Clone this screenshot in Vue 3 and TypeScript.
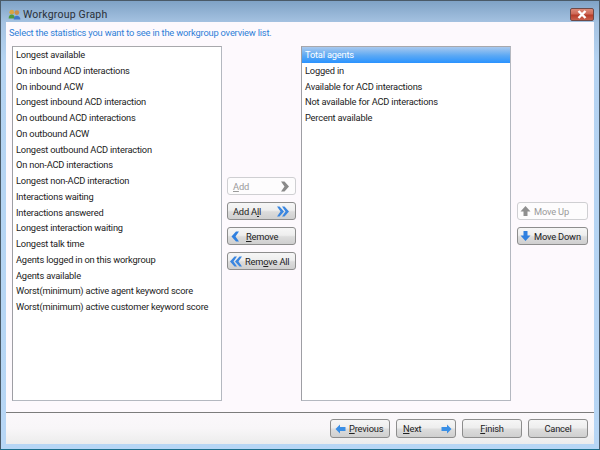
<script setup lang="ts">
const left: string[] = [
  'Longest available','On inbound ACD interactions','On inbound ACW','Longest inbound ACD interaction',
  'On outbound ACD interactions','On outbound ACW','Longest outbound ACD interaction','On non-ACD interactions',
  'Longest non-ACD interaction','Interactions waiting','Interactions answered','Longest interaction waiting',
  'Longest talk time','Agents logged in on this workgroup','Agents available',
  'Worst(minimum) active agent keyword score','Worst(minimum) active customer keyword score'
]
const right: string[] = ['Total agents','Logged in','Available for ACD interactions','Not available for ACD interactions','Percent available']
</script>

<template>
  <div class="win">
    <div class="titlebar">
      <svg class="appicon" width="13" height="11" viewBox="0 0 16 14">
        <circle cx="4.5" cy="4" r="3" fill="#d9a441"/>
        <path d="M0.500 12c0-3 1.600-5 4-5s4 2 4 5z" fill="#4f9a3d"/>
        <circle cx="11" cy="4.500" r="3" fill="#c98f4a"/>
        <path d="M7 13.500c0-3 1.600-5 4-5s4.500 2 4.500 5z" fill="#3d78c8"/>
      </svg>
      <span class="title">Workgroup Graph</span>
      <div class="close">
        <svg width="10" height="9" viewBox="0 0 10 9"><path d="M1.500 1l7 7M8.500 1l-7 7" stroke="#fff" stroke-width="2.400"/></svg>
      </div>
    </div>
    <div class="client">
      <div class="main">
        <p class="prompt">Select the statistics you want to see in the workgroup overview list.</p>
        <div class="columns">
          <ul class="list">
            <li v-for="s in left" :key="s">{{ s }}</li>
          </ul>
          <div class="midbtns">
            <button class="btn wide disabled"><span><u>A</u>dd</span>
              <svg width="11" height="11" viewBox="0 0 11 11"><path d="M2 0.500h3.500l4.500 5-4.500 5H2l3.500-5z" fill="#8a8a8a"/></svg>
            </button>
            <button class="btn wide"><span>Add A<u>l</u>l</span>
              <svg width="14" height="11" viewBox="0 0 14 11"><path d="M1 0.500h2.500l4.500 5-4.500 5H1l3.500-5zM6 0.500h2.500l4.500 5-4.500 5H6l3.500-5z" fill="#3a86e0"/></svg>
            </button>
            <button class="btn wide start">
              <svg class="one" width="9" height="11" viewBox="0 0 9 11"><path d="M8 0.500H5L0.500 5.500 5 10.500h3l-3.500-5z" fill="#2f80e0"/></svg>
              <span><u>R</u>emove</span>
            </button>
            <button class="btn wide start">
              <svg width="14" height="11" viewBox="0 0 14 11"><path d="M13 0.500h-2.500L6 5.500l4.500 5H13l-3.500-5zM8 0.500H5.500L1 5.500l4.500 5H8l-3.500-5z" fill="#3a86e0"/></svg>
              <span>Rem<u>o</u>ve All</span>
            </button>
          </div>
          <ul class="list">
            <li v-for="(s, i) in right" :key="s" :class="{ sel: i === 0 }">{{ s }}</li>
          </ul>
          <div class="sidebtns">
            <button class="btn side disabled">
              <svg width="11" height="12" viewBox="0 0 11 12"><path d="M5.500 1L10.500 6.500H7.500V11h-4V6.500H0.500z" fill="#8f8f8f"/></svg>
              <span>Move Up</span>
            </button>
            <button class="btn side">
              <svg width="11" height="12" viewBox="0 0 11 12"><path d="M3.500 1h4v4.500h3L5.500 11 0.500 5.500h3z" fill="#2f80e0"/></svg>
              <span>Move Down</span>
            </button>
          </div>
        </div>
      </div>
      <div class="footer">
        <button class="btn foot start">
          <svg width="11" height="10" viewBox="0 0 11 10"><path d="M0.500 5L5 0.500V3h5.500v4H5v2.500z" fill="#3a8fe6"/></svg>
          <span><u>P</u>revious</span>
        </button>
        <button class="btn foot between">
          <span><u>N</u>ext</span>
          <svg width="11" height="10" viewBox="0 0 11 10"><path d="M10.500 5L6 0.500V3H0.500v4H6v2.500z" fill="#3a8fe6"/></svg>
        </button>
        <button class="btn foot center"><span><u>F</u>inish</span></button>
        <button class="btn foot center"><span>Cancel</span></button>
      </div>
    </div>
  </div>
</template>

<style scoped>
.win {
  width: 600px; height: 450px; box-sizing: border-box;
  display: flex; flex-direction: column;
  padding: 0 5px 5px;
  background: linear-gradient(#7fa2c6 0, #a6c3e2 22px, #b5d3f2 60px, #b7d6f5 100%);
  border: 1px solid #4a5a68; border-bottom-color: #1c6f8c;
  font-family: Roboto, "Open Sans", sans-serif;
  font-size: 9.300px; letter-spacing: -0.19px; color: #222;
}
.titlebar { height: 21px; box-sizing: border-box; padding-top: 5px; flex: none; display: flex; align-items: center; }
.appicon { margin-left: 2px; margin-right: 2px; }
.title { font-size: 10.500px; letter-spacing: 0.2px; color: #2a3038; }
.close {
  margin-left: auto; width: 24px; height: 13px; box-sizing: border-box;
  background: linear-gradient(#dc8a78 0, #cf6a58 45%, #b63d2a 55%, #c9604c 100%);
  border: 1px solid #6e4a48; border-radius: 2px;
  display: flex; align-items: center; justify-content: center;
}
.client {
  flex: 1; min-height: 0; display: flex; flex-direction: column;
  background: #fdf9fd;
}
.main { flex: 1; min-height: 0; display: flex; flex-direction: column; padding: 2px 6px 0; }
.prompt { margin: 0 0 0 -3px; height: 22px; line-height: 17px; color: #2f7fd8; }
.columns { display: flex; height: 355px; }
.list {
  list-style: none; margin: 0; padding: 0;
  width: 210px; height: 355px; box-sizing: border-box; flex: none;
  background: #fff;
  border: 1px solid #b4b8c0; border-top-color: #a8a8ac; border-left-color: #9e9ea4;
}
.list li { height: 15.750px; line-height: 15.750px; padding-left: 3px; white-space: nowrap; }
.list li.sel {
  color: #fff; background: linear-gradient(#a9c9ee 0, #5aa8f4 55%, #2a93ff 100%);
}
.midbtns { width: 79px; flex: none; display: flex; flex-direction: column; align-items: center; gap: 7px; padding-top: 131px; box-sizing: border-box; }
.sidebtns { flex: 1; display: flex; flex-direction: column; align-items: flex-end; gap: 7px; padding-top: 156px; }
.btn {
  box-sizing: border-box; display: flex; align-items: center; padding: 0 3px;
  font: inherit; letter-spacing: inherit; color: #222; white-space: nowrap;
  height: 18px;
  background: linear-gradient(#f6f6f6 0, #eeeeee 45%, #dcdcdc 55%, #cfcfcf 100%);
  border: 1px solid #8d8d8d; border-radius: 3px;
}
.btn svg { flex: none; }
.btn.disabled { background: #fdfcfd; border-color: #cfcfd2; color: #9a9a9a; }
.wide { width: 69px; justify-content: space-between; padding: 0 5px; }
.wide.start { justify-content: flex-start; gap: 2px; padding: 0 1px; }
.wide .one { margin: 0 4px 0 2px; }
.side { width: 71px; gap: 3px; padding: 0 2px; justify-content: flex-start; }
.footer {
  flex: none; height: 32px; box-sizing: border-box;
  border-top: 1px solid #7c7c7c;
  background: linear-gradient(#fbf8fb 0, #f8f6f8 50%, #ececec 100%);
  display: flex; align-items: center; justify-content: flex-end; gap: 6px;
  padding: 0 6px 0 0;
}
.foot { width: 60px; height: 19px; padding: 0 3px 0 6px; gap: 3px; }
.foot.start { justify-content: flex-start; padding: 0 3px 0 4px; }
.foot.between { justify-content: space-between; }
.foot.center { justify-content: center; padding: 0 3px; }
</style>
